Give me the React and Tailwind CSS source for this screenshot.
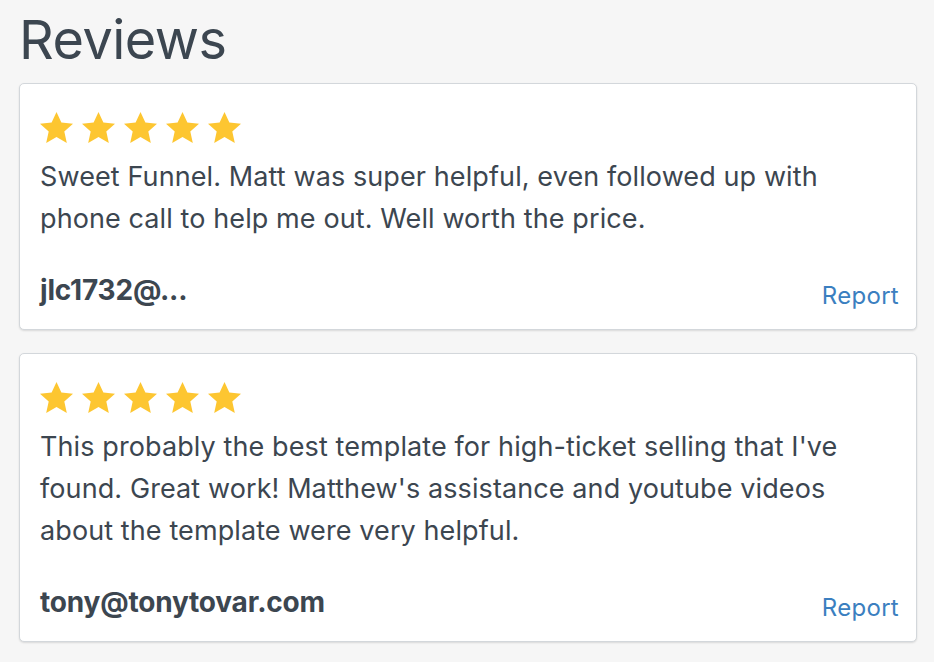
import React from 'react';

const reviews = [
  {
    id: 1,
    text: 'Sweet Funnel. Matt was super helpful, even followed up with phone call to help me out. Well worth the price.',
    author: 'jlc1732@...',
  },
  {
    id: 2,
    text: "This probably the best template for high-ticket selling that I've found. Great work! Matthew's assistance and youtube videos about the template were very helpful.",
    author: 'tony@tonytovar.com',
  },
];

const Star = () => (
  <svg viewBox="0.8 1.2 22.4 21.4" preserveAspectRatio="none" className="w-[33px] h-[31px]" fill="#fdc631">
    <path d="M12 1.2l3.3 7.3 7.9.8-5.9 5.4 1.7 7.9L12 18.5l-7 4.1 1.7-7.9L.8 9.3l7.9-.8z" />
  </svg>
);

const App = () => {
  return (
    <div className="min-h-[662px] bg-[#f6f6f6] px-[19px] pt-[8px] pb-4 font-['Inter',sans-serif] text-[#3c4650]">
      <h1 className="text-[54px] leading-[64px] font-normal tracking-[-0.5px] mb-[11px]">Reviews</h1>

      <div className="flex flex-col gap-[23px] w-[898px]">
        {reviews.map(review => (
          <div
            key={review.id}
            className="bg-white border border-[#d3d7db] rounded-[5px] shadow-[0_1px_2px_rgba(0,0,0,0.12)] pl-[20px] pr-[17px] pt-[28px] pb-[21px]"
          >
            <div className="flex gap-[9px] mb-[13px]">
              {[0, 1, 2, 3, 4].map(i => (
                <Star key={i} />
              ))}
            </div>
            <p className="text-[27px] leading-[42px] tracking-[0.1px] pr-[20px]">{review.text}</p>
            <div className="flex items-baseline justify-between mt-[34px]">
              <span className="text-[28px] leading-[32px] font-bold tracking-[-0.2px]">{review.author}</span>
              <a href="#" className="text-[24px] leading-[32px] tracking-[0.3px] text-[#3b7fc0] translate-y-[4px]">
                Report
              </a>
            </div>
          </div>
        ))}
      </div>
    </div>
  );
};

export default App;
